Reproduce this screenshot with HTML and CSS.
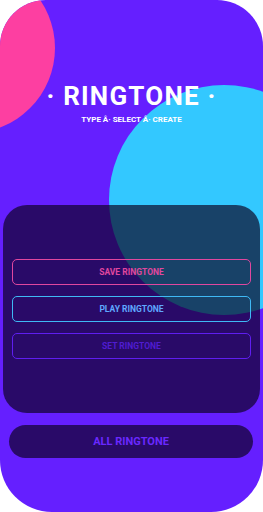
FILE: index.html
```html
<!DOCTYPE html>
<html lang="en">
<head>
    <meta charset="UTF-8">
    <meta name="viewport" content="width=device-width, initial-scale=1.0">
    <title>Ringtone</title>
    <link rel="stylesheet" href="styles.css">
</head>
<body>
    <div class="phone">
        <div class="blob blob-pink"></div>
        <div class="blob blob-cyan"></div>

        <div class="content">
            <div class="header">
                <h1>· RINGTONE ·</h1>
                <p class="tagline">TYPE Â· SELECT Â· CREATE</p>
            </div>

            <div class="panel">
                <button class="btn btn-save">SAVE RINGTONE</button>
                <button class="btn btn-play">PLAY RINGTONE</button>
                <button class="btn btn-set">SET RINGTONE</button>
            </div>

            <button class="btn-all">ALL RINGTONE</button>
        </div>
    </div>
</body>
</html>
```

FILE: styles.css
```css
/* Basic Reset */
* {
    margin: 0;
    padding: 0;
    box-sizing: border-box;
}
body {
    font-family: 'Roboto', 'Liberation Sans', sans-serif;
    background: #ffffff;
    width: 263px;
    height: 512px;
    overflow: hidden;
}
.phone {
    position: relative;
    width: 263px;
    height: 512px;
    background: #651fff;
    border-radius: 46px 46px 52px 52px;
    overflow: hidden;
}
/* decorative circles behind the content */
.blob {
    position: absolute;
    border-radius: 50%;
}
.blob-pink {
    width: 170px;
    height: 170px;
    left: -115px;
    top: -37px;
    background: #fd3fa1;
}
.blob-cyan {
    width: 230px;
    height: 230px;
    left: 109px;
    top: 85px;
    background: #33c8ff;
}
.content {
    position: relative;
    display: flex;
    flex-direction: column;
    height: 100%;
}
.header {
    padding-top: 80px;
    height: 205px;
    text-align: center;
    color: #ffffff;
}
h1 {
    font-size: 26px;
    font-weight: 700;
    letter-spacing: 1.2px;
    line-height: 32px;
}
.tagline {
    margin-top: 2px;
    font-size: 8px;
    font-weight: 700;
    line-height: 12px;
}
.panel {
    margin: 0 3px;
    height: 208px;
    padding: 54px 9px 0;
    background: rgba(12, 0, 30, 0.67);
    border-radius: 24px;
    display: flex;
    flex-direction: column;
    gap: 11px;
}
.btn {
    height: 26px;
    width: 100%;
    background: transparent;
    border: 1.5px solid;
    border-radius: 5px;
    font-family: inherit;
    font-size: 8.5px;
    font-weight: 700;
}
.btn-save {
    border-color: #e0479f;
    color: #e0479f;
}
.btn-play {
    border-color: #3fb9f5;
    color: #5fa8ff;
}
.btn-set {
    border-color: #5f1ef0;
    color: #4f1cd0;
}
.btn-all {
    margin: 12px 10px 0 9px;
    height: 33px;
    border: none;
    border-radius: 17px;
    background: rgba(12, 0, 30, 0.67);
    color: #6a28ff;
    font-family: inherit;
    font-size: 11px;
    font-weight: 700;
}
```
